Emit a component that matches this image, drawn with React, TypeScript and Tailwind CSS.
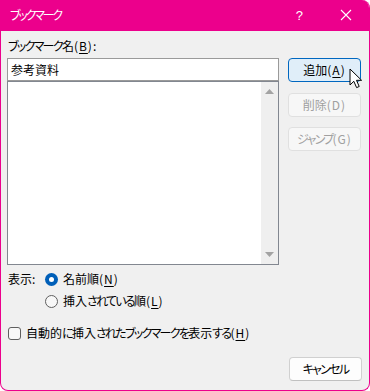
import React from "react";

const font = "[font-family:'Noto_Sans_CJK_JP','Noto_Sans',sans-serif] [font-feature-settings:'palt']";

function T({ children }: { children: React.ReactNode }) {
  const parts = React.Children.toArray(children);
  return (
    <>
      {parts.map((p, i) => {
        if (typeof p !== "string") return <React.Fragment key={i}>{p}</React.Fragment>;
        const runs = p.match(/[\u3040-\u30ff]+|[\x20-\x7e]+|[^\u3040-\u30ff\x20-\x7e]+/g) || [];
        return runs.map((r, j) => {
          if (/^[\u3040-\u30ff]/.test(r))
            return (
              <span key={`${i}-${j}`} className="tracking-[-1.7px]">
                {r}
              </span>
            );
          if (/^[\x20-\x7e]/.test(r))
            return (
              <span key={`${i}-${j}`} className="tracking-[1px]">
                {r}
              </span>
            );
          return <span key={`${i}-${j}`}>{r}</span>;
        });
      })}
    </>
  );
}

function U({ children }: { children: React.ReactNode }) {
  return <span className="underline underline-offset-2 decoration-1 tracking-[1px]">{children}</span>;
}

export default function App() {
  return (
    <div className={`w-[370px] h-[391px] bg-white ${font}`}>
      <div className="w-[370px] h-[391px] flex flex-col rounded-tr-[8px] rounded-b-[8px] overflow-hidden border border-t-0 border-[#ec008c] bg-[#f0f0f0]">
        {/* title bar */}
        <div className="h-[31px] bg-[#ec008c] flex items-center text-white text-[12px] leading-none -mx-px shrink-0">
          <span className="ml-[10px] mt-[-1px] tracking-[-2.2px]">ブックマーク</span>
          <span className="ml-auto mr-[37px] text-[13px] font-['Liberation_Sans',sans-serif] mt-[-1px]">?</span>
          <svg width="12" height="12" viewBox="0 0 12 12" className="mr-[18px] mt-[-1px]">
            <path d="M1 1 L11 11 M11 1 L1 11" stroke="white" strokeWidth="1.1" />
          </svg>
        </div>
        {/* body */}
        <div className="flex-1 flex flex-col px-[6px] pt-[7px] pb-[9px] text-[12px] leading-[16px] text-black">
          <div className="pl-[1px]">
            <T>ブックマーク名(<U>B</U>):</T>
          </div>
          <div className="flex mt-[4px]">
            <div className="w-[272px] flex flex-col">
              <div className="h-[23px] border border-[#9a9a9a] bg-white pl-[3px] flex items-center">参考資料</div>
              <div className="h-[184px] border border-[#828790] bg-white flex justify-end">
                <div className="w-[17px] h-full bg-[#efefef] flex flex-col items-center justify-between py-[7px]">
                  <svg width="9" height="5" viewBox="0 0 9 5"><path d="M0 5 L4.5 0 L9 5 Z" fill="#a3a3a3" /></svg>
                  <svg width="9" height="5" viewBox="0 0 9 5"><path d="M0 0 L4.5 5 L9 0 Z" fill="#a3a3a3" /></svg>
                </div>
              </div>
            </div>
            <div className="ml-[9px] w-[73px] flex flex-col relative">
              <div className="h-[24px] rounded-[4px] border border-[#0067c0] bg-[#e0eef9] flex items-center justify-center">
                <T>追加(<U>A</U>)</T>
              </div>
              <div className="h-[24px] mt-[11px] rounded-[4px] border border-[#e0e0e0] bg-[#f7f7f7] text-[#a0a0a0] flex items-center justify-center">
                <T>削除(D)</T>
              </div>
              <div className="h-[24px] mt-[10px] rounded-[4px] border border-[#e0e0e0] bg-[#f7f7f7] text-[#a0a0a0] flex items-center justify-center">
                <T>ジャンプ(G)</T>
              </div>
              <svg width="14" height="21" viewBox="0 0 14 21" className="absolute left-[61px] top-[10px]">
                <path d="M1 1 L1 17 L4.8 13.3 L7.6 19.6 L10.2 18.5 L7.5 12.3 L12.6 12.3 Z" fill="white" stroke="black" strokeWidth="1" strokeLinejoin="miter" />
              </svg>
            </div>
          </div>
          {/* radio group */}
          <div className="flex mt-[6px]">
            <div className="w-[38px] pl-[1px]">
              <T>表示:</T>
            </div>
            <div className="flex flex-col gap-[6px]">
              <div className="flex items-center">
                <span className="w-[13px] h-[13px] rounded-full bg-[#005fb8] flex items-center justify-center">
                  <span className="w-[5px] h-[5px] rounded-full bg-white" />
                </span>
                <span className="ml-[5px]">
                  <T>名前順(<U>N</U>)</T>
                </span>
              </div>
              <div className="flex items-center">
                <span className="w-[13px] h-[13px] rounded-full border border-[#5f5f5f] bg-[#f7f7f7]" />
                <span className="ml-[5px]">
                  <T>挿入されている順(<U>L</U>)</T>
                </span>
              </div>
            </div>
          </div>
          {/* checkbox */}
          <div className="flex items-center mt-[16px] pl-[1px]">
            <span className="w-[13px] h-[13px] rounded-[3px] border border-[#5f5f5f] bg-[#f7f7f7]" />
            <span className="ml-[5px]">
              <T>自動的に挿入されたブックマークを表示する(<U>H</U>)</T>
            </span>
          </div>
          <div className="mt-auto flex justify-end pr-[1px]">
            <div className="w-[73px] h-[24px] rounded-[4px] border border-[#d0d0d0] border-b-[#c0c0c0] bg-[#fdfdfd] flex items-center justify-center">
              <T>キャンセル</T>
            </div>
          </div>
        </div>
      </div>
    </div>
  );
}
